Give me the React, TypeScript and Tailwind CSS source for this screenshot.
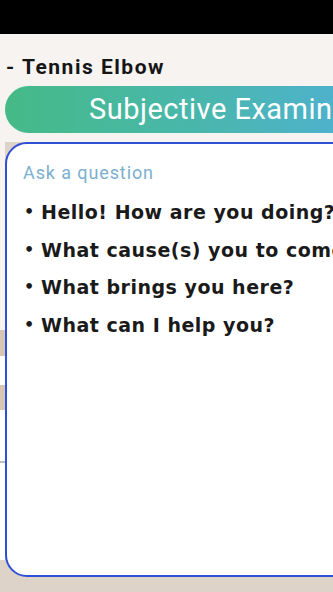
import React from 'react';

const questions = [
  'Hello! How are you doing?',
  'What cause(s) you to come here today?',
  'What brings you here?',
  'What can I help you?',
];

export default function App() {
  return (
    <div
      className="w-[333px] h-[592px] overflow-hidden flex flex-col bg-[#f6f3f1]"
      style={{ fontFamily: 'Roboto, "Noto Sans", sans-serif' }}
    >
      {/* top status bar */}
      <div className="h-[34px] shrink-0 bg-black" />

      <div className="flex-1 flex flex-col min-h-0">
        {/* title */}
        <div className="h-[52px] shrink-0 flex items-end pb-[3px] pl-[6px]">
          <span className="text-[21px] font-bold tracking-[1.5px] text-[#151515] whitespace-nowrap">- Tennis Elbow</span>
        </div>

        {/* section pill */}
        <div className="shrink-0 pl-[5px]">
          <div className="w-[420px] h-[47px] rounded-full bg-gradient-to-r from-[#45ba86] via-[#4ab6b0] to-[#51aee0] flex items-center pl-[84px]">
            <span className="text-[29px] tracking-[0.5px] text-white whitespace-nowrap leading-none">Subjective Examination</span>
          </div>
        </div>

        {/* card area */}
        <div className="flex-1 flex min-h-0 pt-[9px]">
          <div className="w-[5px] shrink-0 flex flex-col">
            <div className="h-[188px] bg-[#f6f3f1]" />
            <div className="h-[26px] bg-[#d6c6b2]" />
            <div className="h-[29px] bg-white" />
            <div className="h-[25px] bg-[#d6c6b2]" />
            <div className="h-[51px] bg-white" />
            <div className="h-[2px] bg-[#b9c2b4]" />
            <div className="flex-1 bg-white" />
            <div className="h-[32px] bg-[#ddd3c8]" />
          </div>
          <div className="flex-1 flex flex-col min-w-0 bg-[#ddd3c8]">
            <div className="h-[435px] w-[420px] shrink-0 bg-white border-2 border-[#2f4fd6] rounded-[22px] pt-[16px] pl-[16px]">
              <div className="text-[18px] tracking-[0.9px] text-[#7cb0cf] leading-[26px]">Ask a question</div>
              <ul className="mt-[12px] flex flex-col gap-[9px]">
                {questions.map((q) => (
                  <li
                    key={q}
                    className="flex items-center h-[28.5px] whitespace-nowrap text-[19px] tracking-[0.5px] font-bold text-[#1a1a1a]"
                    style={{ fontFamily: '"DejaVu Sans", Roboto, sans-serif' }}
                  >
                    <span className="w-[18px] shrink-0 pl-[1px] text-[16px] leading-none">•</span>
                    <span>{q}</span>
                  </li>
                ))}
              </ul>
            </div>
          </div>
        </div>
      </div>
    </div>
  );
}
